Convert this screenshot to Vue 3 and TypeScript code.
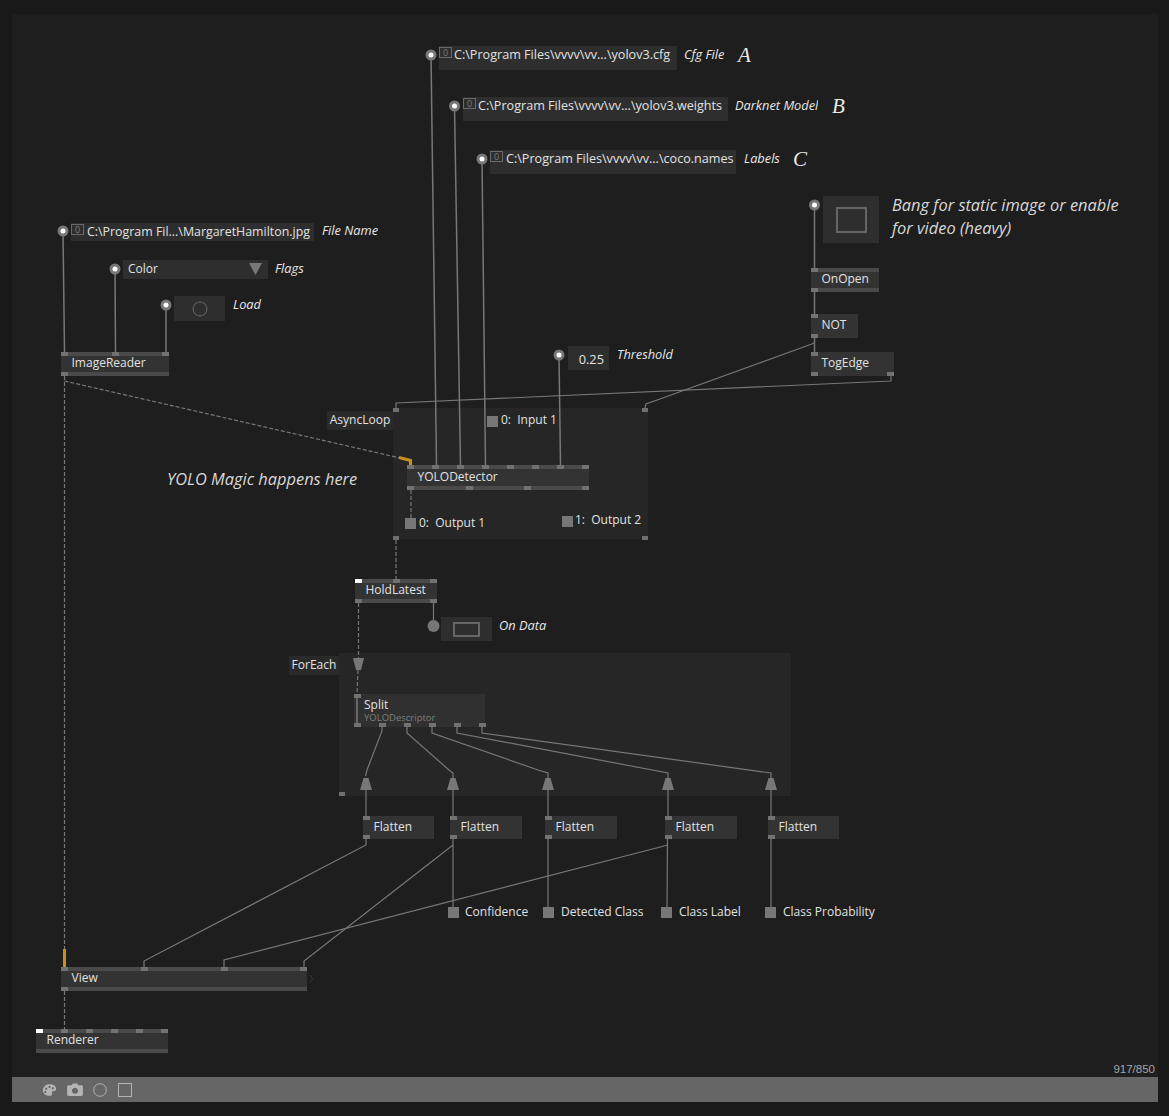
<script setup lang="ts">
type Box = { x: number; y: number; w: number; h: number }
type NodeItem = Box & { name: string; strips?: boolean; top: number[]; bottom: number[]; white?: boolean }
type Label = { text: string; x: number; y: number; w?: number; cls?: string }

const OX = 12
const OY = 14
const at = (x: number, y: number, w?: number, h?: number) => ({
  left: `${x - OX}px`,
  top: `${y - OY}px`,
  ...(w !== undefined ? { width: `${w}px` } : {}),
  ...(h !== undefined ? { height: `${h}px` } : {}),
})

const regions: Box[] = [
  { x: 393, y: 408, w: 255, h: 131 },
  { x: 339, y: 653, w: 452, h: 143 },
]
const regionLabels: (Box & { name: string })[] = [
  { name: 'AsyncLoop', x: 327, y: 411, w: 66, h: 19 },
  { name: 'ForEach', x: 289, y: 656, w: 50, h: 19 },
]
const nodes: NodeItem[] = [
  { name: 'ImageReader', x: 61, y: 352, w: 108, h: 24, strips: true, top: [61, 112, 162], bottom: [61] },
  { name: 'YOLODetector', x: 407, y: 465, w: 182, h: 25, strips: true, top: [407, 432, 457, 482, 507, 532, 557, 582], bottom: [407, 466, 524, 582] },
  { name: 'OnOpen', x: 811, y: 268, w: 68, h: 24, strips: true, top: [811], bottom: [811] },
  { name: 'NOT', x: 811, y: 314, w: 47, h: 24, top: [811], bottom: [811] },
  { name: 'TogEdge', x: 811, y: 352, w: 83, h: 24, top: [811], bottom: [811, 887] },
  { name: 'HoldLatest', x: 355, y: 579, w: 82, h: 24, strips: true, top: [355, 393, 430], bottom: [355, 430], white: true },
  { name: 'Flatten', x: 363, y: 816, w: 71, h: 23, top: [363], bottom: [363] },
  { name: 'Flatten', x: 450, y: 816, w: 72, h: 23, top: [450], bottom: [450] },
  { name: 'Flatten', x: 545, y: 816, w: 72, h: 23, top: [545], bottom: [545] },
  { name: 'Flatten', x: 665, y: 816, w: 72, h: 23, top: [665], bottom: [665] },
  { name: 'Flatten', x: 768, y: 816, w: 71, h: 23, top: [768], bottom: [768] },
  { name: 'View', x: 61, y: 967, w: 246, h: 24, strips: true, top: [61, 141, 221, 300], bottom: [61] },
  { name: 'Renderer', x: 36, y: 1029, w: 132, h: 24, strips: true, top: [36, 61, 86, 111, 136, 161], bottom: [], white: true },
]
const strings = [
  { text: 'C:\\Program Files\\vvvv\\vv...\\yolov3.cfg', x: 439, y: 46, w: 238, h: 24, pad: 15, up: 7, cls: '' },
  { text: 'C:\\Program Files\\vvvv\\vv...\\yolov3.weights', x: 463, y: 97, w: 265, h: 24, pad: 15, up: 7, cls: '' },
  { text: 'C:\\Program Files\\vvvv\\vv...\\coco.names', x: 490, y: 150, w: 246, h: 24, pad: 16, up: 7, cls: '' },
  { text: 'C:\\Program Fil...\\MargaretHamilton.jpg', x: 71, y: 223, w: 243, h: 18, pad: 16, up: 1, cls: 'path-file' },
]
const labels: Label[] = [
  { text: 'Cfg File', x: 684, y: 54 },
  { text: 'Darknet Model', x: 735, y: 105, w: 83 },
  { text: 'Labels', x: 744, y: 158 },
  { text: 'File Name', x: 322, y: 230 },
  { text: 'Flags', x: 275, y: 268 },
  { text: 'Load', x: 233, y: 304 },
  { text: 'Threshold', x: 617, y: 354 },
  { text: 'On Data', x: 499, y: 625 },
  { text: 'A', x: 738, y: 55, cls: 'letter' },
  { text: 'B', x: 832, y: 106, cls: 'letter' },
  { text: 'C', x: 793, y: 159, cls: 'letter' },
  { text: 'Bang for static image or enable', x: 892, y: 205, cls: 'big' },
  { text: 'for video (heavy)', x: 892, y: 228, cls: 'big' },
  { text: 'YOLO Magic happens here', x: 167, y: 479, cls: 'big' },
]
const ios = [
  { text: '0:  Input 1', sx: 487, sy: 416, tx: 501, ty: 420 },
  { text: '0:  Output 1', sx: 405, sy: 518, tx: 419, ty: 523 },
  { text: '1:  Output 2', sx: 562, sy: 516, tx: 575, ty: 520 },
  { text: 'Confidence', sx: 448, sy: 907, tx: 465, ty: 912 },
  { text: 'Detected Class', sx: 543, sy: 907, tx: 561, ty: 912 },
  { text: 'Class Label', sx: 661, sy: 907, tx: 679, ty: 912 },
  { text: 'Class Probability', sx: 765, sy: 907, tx: 783, ty: 912 },
]
const inputPins = [
  [431, 55], [454.5, 106], [482, 159], [63, 231], [115, 269], [166, 305], [559, 355], [814.5, 205],
]
const solid: string[] = [
  '431,55 436.5,465', '454.5,106 460.5,465', '482,159 485.5,465', '559,355 560.5,465',
  '63,231 64.5,352', '115,269 115.5,352', '166,305 166,352',
  '814.5,205 814.5,268', '814.5,292 814.5,314', '814.5,338 814.5,352',
]
const thin: string[] = [
  '814.5,343 660,399 646,404 645,408',
  '891,376 891,381 396,403 396,408',
  '433.5,603 433.5,620',
  '382,727 382,731 367,770 365.5,776',
  '407,727 407,733 449,770 453,773 453,778',
  '432,727 432,733 538,770 548,773 548,778',
  '457,727 457,733 668,773 668,778',
  '482,727 482,733 771,773 771,778',
  '366,790 366,816', '453,790 453,816', '548,790 548,816', '668,790 668,816', '771,790 771,816',
  '366,839 366,845 144,961 144,967',
  '453,845 304,961 304,967',
  '668,845 224,960 224,967',
  '453,839 453,907', '548,839 548,907', '667.5,839 667,907', '771,839 771,907',
]
const dashed: string[] = [
  '64.5,376 64.5,950',
  '64.5,381 400,458',
  '411,490 411,518',
  '396,540 396,579',
  '358.5,603 358.5,660',
  '358,670 357,694',
  '64.5,991 64.5,1029',
]
const trapezoids = [366, 453, 548, 668, 771]
</script>

<template>
  <div class="page">
    <main class="canvas">
      <div v-for="(r, i) in regions" :key="'r' + i" class="region" :style="at(r.x, r.y, r.w, r.h)"></div>

      <svg class="wires" width="1169" height="1116" viewBox="0 0 1169 1116">
        <polyline v-for="(p, i) in solid" :key="'s' + i" :points="p" class="w-solid" />
        <polyline v-for="(p, i) in thin" :key="'t' + i" :points="p" class="w-thin" />
        <polyline v-for="(p, i) in dashed" :key="'d' + i" :points="p" class="w-dash" />
        <polyline points="399,457.5 410.5,460.5 410.5,465" class="w-orange" />
        <line x1="64.5" y1="949" x2="64.5" y2="967" class="w-orange" />
        <polygon points="353,658 364,658 361,670 356,670" class="tri" />
        <polygon v-for="x in trapezoids" :key="'u' + x" :points="`${x - 2.5},778 ${x + 2.5},778 ${x + 6},790 ${x - 6},790`" class="tri" />
        <circle cx="433.5" cy="626" r="6" class="tri" />
        <g v-for="(p, i) in inputPins" :key="'p' + i">
          <circle :cx="p[0]" :cy="p[1]" r="5.5" class="ring" />
          <circle :cx="p[0]" :cy="p[1]" r="2.5" class="dot" />
        </g>
        <path d="M310 975l2.5 4-2.5 4" class="chev" />
      </svg>

      <div v-for="l in regionLabels" :key="l.name" class="region-label" :style="at(l.x, l.y, l.w, l.h)">{{ l.name }}</div>
      <div class="pin" :style="at(393, 408)"></div>
      <div class="pin" :style="at(642, 408)"></div>
      <div class="pin" :style="at(393, 536)"></div>
      <div class="pin" :style="at(642, 536)"></div>
      <div class="pin" :style="at(339, 792)"></div>

      <div
        v-for="(n, i) in nodes"
        :key="'n' + i"
        class="node"
        :class="{ strips: n.strips }"
        :style="at(n.x, n.y, n.w, n.h)"
      >
        {{ n.name }}
        <i
          v-for="(x, j) in n.top"
          :key="'a' + j"
          class="node-pin"
          :class="{ white: n.white && j === 0 }"
          :style="{ left: `${x - n.x}px`, top: '0px' }"
        ></i>
        <i
          v-for="(x, j) in n.bottom"
          :key="'b' + j"
          class="node-pin"
          :style="{ left: `${x - n.x}px`, bottom: '0px' }"
        ></i>
      </div>

      <div class="split" :style="at(354, 694, 131, 33)">
        <span class="split-name">Split</span>
        <span class="split-sub">YOLODescriptor</span>
        <b class="split-bar"></b>
        <i class="node-pin split-top"></i>
        <i class="node-pin split-bottom"></i>
        <i v-for="x in [25, 50, 75, 100, 125]" :key="x" class="node-pin" :style="{ left: `${x}px`, bottom: '0px' }"></i>
      </div>

      <div
        v-for="s in strings"
        :key="s.text"
        class="iobox path"
        :class="s.cls"
        :style="{ ...at(s.x, s.y, s.w, s.h), paddingLeft: `${s.pad}px`, paddingBottom: `${s.up}px` }"
      >
        <span class="zero">0</span>{{ s.text }}
      </div>

      <div class="iobox enum" :style="at(123, 260, 145, 19)">
        Color
        <svg class="enum-arrow" width="13" height="12" viewBox="0 0 13 12"><polygon points="0,0 13,0 6.5,12" /></svg>
      </div>
      <div class="iobox center" :style="at(174, 296, 51, 25)">
        <svg width="16" height="16" viewBox="0 0 16 16"><circle cx="8" cy="8" r="7" class="hollow" /></svg>
      </div>
      <div class="iobox number" :style="at(568, 346, 41, 24)">0.25</div>
      <div class="iobox center" :style="at(823, 196, 56, 47)">
        <span class="toggle toggle-large"></span>
      </div>
      <div class="iobox center" :style="at(441, 617, 51, 24)">
        <span class="toggle toggle-small"></span>
      </div>

      <span
        v-for="l in labels"
        :key="l.text"
        class="label"
        :class="[l.cls, { clipped: l.w }]"
        :style="at(l.x, l.y - 12, l.w)"
      >{{ l.text }}</span>

      <template v-for="o in ios" :key="o.text">
        <i class="square" :style="at(o.sx, o.sy)"></i>
        <span class="io-text" :style="at(o.tx, o.ty - 12)">{{ o.text }}</span>
      </template>

      <span class="counter">917/850</span>
    </main>

    <footer class="toolbar">
      <svg class="tool" width="15" height="14" viewBox="0 0 18 16">
        <path
          fill-rule="evenodd"
          d="M8.5 1C13 .6 17 3 17 6.6c0 2.4-2 3-3.6 3-1.3 0-2 .6-1.5 1.8.6 1.3.4 3.6-2.4 3.6C4.5 15 1 12.3 1 8.3 1 4.4 4.3 1.3 8.5 1zM5 5a1.3 1.3 0 1 0 .01 0zM9 3a1.3 1.3 0 1 0 .01 0zM13 4.5a1.3 1.3 0 1 0 .01 0zM4 9a1.3 1.3 0 1 0 .01 0z"
        />
      </svg>
      <svg class="tool" width="16" height="13" viewBox="0 0 17 14">
        <path
          fill-rule="evenodd"
          d="M1.5 2.5H5L6 .5h5l1 2h3.5A1.5 1.5 0 0 1 17 4v8.5a1.5 1.5 0 0 1-1.5 1.5h-14A1.5 1.5 0 0 1 0 12.5V4a1.5 1.5 0 0 1 1.5-1.5zM8.5 5a3.3 3.3 0 1 0 .01 0z"
        />
      </svg>
      <svg class="tool" width="14" height="14" viewBox="0 0 14 14"><circle cx="7" cy="7" r="6.3" class="tool-line" /></svg>
      <svg class="tool" width="14" height="14" viewBox="0 0 14 14"><rect x="0.5" y="0.5" width="13" height="13" class="tool-line" /></svg>
    </footer>
  </div>
</template>

<style>
html,
body {
  margin: 0;
  background: #191919;
}
</style>

<style scoped>
.page {
  width: 1169px;
  height: 1116px;
  box-sizing: border-box;
  padding: 14px 11px 14px 12px;
  display: flex;
  flex-direction: column;
  background: #191919;
  font-family: 'Open Sans', 'Noto Sans', sans-serif;
  font-size: 12px;
  color: #e2e2e2;
  overflow: hidden;
}
.canvas {
  position: relative;
  flex: 1;
  background: #1e1e1e;
}
.toolbar {
  height: 25px;
  background: #666;
  display: grid;
  grid-template-columns: repeat(4, 25px);
  align-items: center;
  justify-items: center;
  padding-left: 25px;
}
.tool {
  display: block;
  fill: #b4b4b4;
}
.tool-line {
  fill: none;
  stroke: #b4b4b4;
}
.region {
  position: absolute;
  background: #262626;
}
.wires {
  position: absolute;
  left: -12px;
  top: -14px;
  overflow: visible;
  pointer-events: none;
}
.wires polyline,
.wires line {
  fill: none;
}
.w-solid {
  stroke: #777;
  stroke-width: 1.5;
}
.w-thin {
  stroke: #777;
  stroke-width: 1.2;
}
.w-dash {
  stroke: #777;
  stroke-width: 1.2;
  stroke-dasharray: 4 2;
}
.w-orange {
  stroke: #c8901a;
  stroke-width: 3;
}
.tri,
.ring {
  fill: #777;
}
.dot {
  fill: #fff;
}
.chev {
  fill: none;
  stroke: #3a3a3a;
}
.region-label {
  position: absolute;
  box-sizing: border-box;
  padding-bottom: 2px;
  background: #2a2a2a;
  display: flex;
  align-items: center;
  justify-content: center;
  white-space: nowrap;
}
.pin {
  position: absolute;
  width: 6px;
  height: 4px;
  background: #6f6f6f;
}
.node {
  position: absolute;
  box-sizing: border-box;
  background: #333;
  display: flex;
  align-items: center;
  padding: 0 0 3px 10.5px;
  white-space: nowrap;
}
.node.strips {
  border-top: 4px solid #4a4a4a;
  border-bottom: 4px solid #4a4a4a;
  padding-bottom: 3px;
}
.node-pin {
  position: absolute;
  width: 7px;
  height: 4px;
  background: #727272;
}
.node.strips .node-pin[style*='top'] {
  margin-top: -4px;
}
.node.strips .node-pin[style*='bottom'] {
  margin-bottom: -4px;
}
.node-pin.white {
  background: #fff;
}
.split {
  position: absolute;
  box-sizing: border-box;
  background: #303030;
  padding: 3px 0 0 10px;
  display: flex;
  flex-direction: column;
}
.split-top {
  left: 0;
  top: 0;
}
.split-bottom {
  left: 0;
  bottom: 0;
}
.split-name {
  line-height: 16px;
}
.split-sub {
  font-size: 9.5px;
  line-height: 10px;
  color: #7e7e7e;
}
.split-bar {
  position: absolute;
  left: 2px;
  top: 0;
  bottom: 0;
  width: 2px;
  background: #666;
}
.iobox {
  position: absolute;
  box-sizing: border-box;
  background: #2e2e2e;
  display: flex;
  align-items: center;
  white-space: nowrap;
}
.iobox.path {
  font-size: 12.6px;
}
.iobox.path.path-file {
  font-size: 12.4px;
}
.zero {
  position: absolute;
  left: 0;
  top: 1px;
  width: 13px;
  height: 11px;
  box-sizing: border-box;
  border: 1px solid #6a6a6a;
  font-size: 9px;
  line-height: 9px;
  text-align: center;
  color: #7a7a7a;
}
.enum {
  padding: 0 0 2px 5px;
}
.enum-arrow {
  position: absolute;
  right: 6px;
  top: 3px;
  fill: #777;
}
.center {
  justify-content: center;
}
.number {
  justify-content: flex-end;
  padding: 2px 5px 0 0;
  font-size: 12.8px;
}
.hollow {
  fill: none;
  stroke: #666;
}
.toggle {
  box-sizing: border-box;
  border: 2px solid #666;
}
.toggle-large {
  width: 31px;
  height: 26px;
}
.toggle-small {
  width: 27px;
  height: 15px;
}
.label {
  position: absolute;
  height: 24px;
  line-height: 24px;
  font-style: italic;
  font-size: 12.8px;
  color: #e8e8e8;
  white-space: nowrap;
}
.label.clipped {
  overflow: hidden;
}
.label.big {
  font-size: 16.4px;
  color: #d8d8d8;
}
.label.letter {
  font-family: 'Liberation Serif', serif;
  font-size: 21px;
  color: #e8e8e8;
}
.square {
  position: absolute;
  width: 11px;
  height: 11px;
  background: #777;
}
.io-text {
  position: absolute;
  height: 24px;
  line-height: 24px;
  white-space: pre;
}
.counter {
  position: absolute;
  right: 3px;
  bottom: 1px;
  font-family: 'Liberation Sans', sans-serif;
  font-size: 11.5px;
  line-height: 14px;
  color: #a8a8a8;
}
</style>
